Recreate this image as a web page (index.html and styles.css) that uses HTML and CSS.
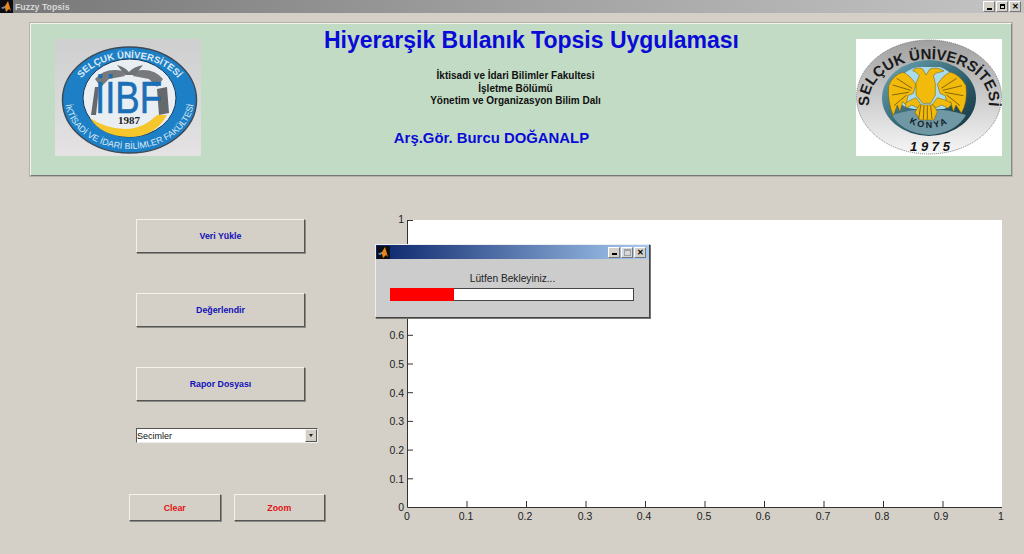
FILE: index.html
```html
<!DOCTYPE html>
<html>
<head>
	<meta charset="utf-8"/>
	<title>Fuzzy Topsis</title>
	<link rel="stylesheet" href="styles.css">
</head>
<body>
	<div id="window">
		<div id="titlebar">
			<svg class="appicon" viewBox="0 0 13 13"><rect width="13" height="13" fill="#0c0c14"/><path d="M1 8 L5 6 L8 1 L11 11 L9 9 L6 12 L5 8 Z" fill="#e8861c"/><path d="M1 8 L5 6 L5 8 L3 9 Z" fill="#5a8fc0"/></svg>
			<span class="apptitle">Fuzzy Topsis</span>
			<div class="winbtns">
				<span class="winbtn"><i class="glyph-min"></i></span>
				<span class="winbtn"><i class="glyph-restore"></i></span>
				<span class="winbtn glyph-close">✕</span>
			</div>
		</div>

		<div id="header">
			<svg class="logo" viewBox="0 0 146 117">
				<defs>
					<linearGradient id="greybg" x1="0" y1="0" x2="0" y2="1"><stop offset="0" stop-color="#cfcfcf"/><stop offset="1" stop-color="#e4e2e2"/></linearGradient>
					<path id="arcTop" d="M18.500 60 A56 41 0 0 1 130.500 60"/>
					<path id="arcBottom" d="M10 60 A64.500 50 0 0 0 139 60"/>
				</defs>
				<rect width="146" height="117" fill="url(#greybg)"/>
				<ellipse cx="74.500" cy="61" rx="67" ry="53" fill="#1d80c6" stroke="#3a4a58" stroke-width="1.500"/>
				<ellipse cx="74.500" cy="59" rx="46.500" ry="39" fill="#e9eef2" stroke="#17365a"/>
				<path d="M35 79 Q52 90 70 90 Q88 90 102 76 L112 76 Q100 98 74 98 Q46 97 35 79 Z" fill="#f5c72c"/>
				<path d="M40 40 Q50 28 68 32 L70 37 L54 40 L46 48 Z M108 40 Q98 28 80 32 L78 37 L94 40 L102 48 Z" fill="#77797c"/>
				<path d="M62 26 Q70 28 74 33 Q78 28 88 26 L80 36 L70 36 Z" fill="#6f7376"/>
				<path d="M40 48 L36 76 L41 76 L44 48 Z M102 50 L112 48 L114 74 L104 76 Z" fill="#66696c"/>
				<text class="iibf" x="40" y="74" textLength="67" lengthAdjust="spacingAndGlyphs">İİBF</text>
				<text class="year" x="74" y="85" text-anchor="middle">1987</text>
				<text class="ring"><textPath href="#arcTop" startOffset="50%" text-anchor="middle">SELÇUK ÜNİVERSİTESİ</textPath></text>
				<text class="ring ring-small"><textPath href="#arcBottom" startOffset="50%" text-anchor="middle">İKTİSADİ VE İDARİ BİLİMLER FAKÜLTESİ</textPath></text>
			</svg>

			<div class="heading">
				<h1>Hiyerarşik Bulanık Topsis Uygulaması</h1>
				<p class="faculty">İktisadi ve İdari Bilimler Fakultesi<br>İşletme Bölümü<br>Yönetim ve Organizasyon Bilim Dalı</p>
				<p class="author">Arş.Gör. Burcu DOĞANALP</p>
			</div>

			<svg class="logo" viewBox="0 0 146 117">
				<defs>
					<linearGradient id="rim" x1="0" y1="0" x2="0" y2="1"><stop offset="0" stop-color="#a0a0a0"/><stop offset="0.600" stop-color="#d4d4d4"/><stop offset="1" stop-color="#f6f6f6"/></linearGradient>
					<linearGradient id="core" x1="0" y1="0" x2="1" y2="1"><stop offset="0" stop-color="#6fa9b8"/><stop offset="0.600" stop-color="#2b5a68"/><stop offset="1" stop-color="#15323c"/></linearGradient>
					<path id="arcRight" d="M14 70 A60 42 0 1 1 132 70"/>
					<path id="arcKonya" d="M44 78 Q73 100 102 78"/>
				</defs>
				<rect width="146" height="117" fill="#fff"/>
				<ellipse cx="73" cy="58" rx="72.500" ry="57" fill="url(#rim)" stroke="#777" stroke-dasharray="1 1"/>
				<ellipse cx="73" cy="59" rx="47" ry="38" fill="url(#core)"/>
				<path d="M34 52 Q44 32 62 28 L84 28 Q100 34 106 52 Q100 66 88 70 L58 70 Q42 68 34 52 Z" fill="#a9dcea"/>
				<path d="M36 76 Q73 64 110 76 Q100 94 73 96 Q46 94 36 76 Z" fill="#6f98a4"/>
				<g class="eagle" transform="translate(24 16) scale(0.3333)">
					<path d="M108 88 Q85 55 68 52 Q40 60 26 92 Q22 140 40 182 L52 150 L60 170 L68 140 L78 150 L84 122 L100 115 Z"/>
					<path d="M172 88 Q195 55 212 52 Q240 60 258 92 Q264 140 244 175 L228 150 L220 170 L212 140 L202 150 L196 122 L180 115 Z"/>
					<path d="M98 46 Q112 34 128 42 L138 60 L150 42 Q170 34 192 48 L178 52 Q168 52 160 62 L166 85 L166 120 L152 145 L128 145 L108 120 L108 85 L118 62 Q110 52 98 46 Z"/>
					<path d="M75 145 Q90 135 108 128 L124 150 L112 158 L95 150 L80 160 Z"/>
					<path d="M215 145 Q200 135 172 128 L156 150 L168 158 L185 150 L205 160 Z"/>
					<path d="M118 150 L160 150 L172 170 L162 195 L120 195 L105 172 Z"/>
				</g>
				<path class="feathers" transform="translate(24 16) scale(0.3333)" d="M96 100 L50 70 M92 106 L38 90 M86 112 L36 120 M80 120 L42 152 M184 100 L230 70 M188 106 L246 92 M194 112 L250 122 M200 120 L240 152 M122 152 L116 192 M132 152 L130 194 M142 152 L142 194 M152 152 L156 192"/>
				<text class="seal"><textPath href="#arcRight" startOffset="50%" text-anchor="middle">SELÇUK ÜNİVERSİTESİ</textPath></text>
				<text class="konya"><textPath href="#arcKonya" startOffset="50%" text-anchor="middle">KONYA</textPath></text>
				<text class="founded" x="74" y="112" text-anchor="middle">1 9 7 5</text>
			</svg>
		</div>

		<div id="content">
			<div id="side">
				<div class="button wide blue">Veri Yükle</div>
				<div class="button wide blue">Değerlendir</div>
				<div class="button wide blue">Rapor Dosyası</div>
				<div id="choice">
					<span>Secimler</span>
					<span class="arrow"></span>
				</div>
				<div id="actions">
					<div class="button small red">Clear</div>
					<div class="button small red">Zoom</div>
				</div>
			</div>

			<svg id="plot" viewBox="0 -6 640 320">
				<rect x="27" y="4" width="595" height="287" fill="#fff"/>
				<g stroke="#333" fill="none">
					<path d="M27.500 4 V291.500 H622"/>
					<path d="M27 4.500 H33 M27 33.200 H33 M27 61.900 H33 M27 90.600 H33 M27 119.300 H33 M27 148 H33 M27 176.700 H33 M27 205.400 H33 M27 234.100 H33 M27 262.800 H33"/>
					<path d="M87 291 V285 M146.500 291 V285 M206 291 V285 M265.500 291 V285 M325 291 V285 M384.500 291 V285 M444 291 V285 M503.500 291 V285 M563 291 V285"/>
				</g>
				<g class="ticks ylabels">
					<text x="24" y="7">1</text>
					<text x="24" y="37">0.9</text>
					<text x="24" y="66">0.8</text>
					<text x="24" y="94">0.7</text>
					<text x="24" y="123">0.6</text>
					<text x="24" y="152">0.5</text>
					<text x="24" y="181">0.4</text>
					<text x="24" y="209">0.3</text>
					<text x="24" y="238">0.2</text>
					<text x="24" y="267">0.1</text>
					<text x="24" y="295">0</text>
				</g>
				<g class="ticks xlabels">
					<text x="27" y="304">0</text>
					<text x="86" y="304">0.1</text>
					<text x="145" y="304">0.2</text>
					<text x="205" y="304">0.3</text>
					<text x="264" y="304">0.4</text>
					<text x="324" y="304">0.5</text>
					<text x="383" y="304">0.6</text>
					<text x="443" y="304">0.7</text>
					<text x="502" y="304">0.8</text>
					<text x="561" y="304">0.9</text>
					<text x="621" y="304">1</text>
				</g>
			</svg>
		</div>

		<div id="waitbar">
			<div class="waitbar-title">
				<svg class="appicon" viewBox="0 0 13 13"><rect width="13" height="13" fill="#0c0c14"/><path d="M1 8 L5 6 L8 1 L11 11 L9 9 L6 12 L5 8 Z" fill="#e8861c"/><path d="M1 8 L5 6 L5 8 L3 9 Z" fill="#5a8fc0"/></svg>
				<div class="winbtns">
					<span class="winbtn"><i class="glyph-min"></i></span>
					<span class="winbtn off"><i class="glyph-max"></i></span>
					<span class="winbtn glyph-close">✕</span>
				</div>
			</div>
			<div class="waitbar-msg">Lütfen Bekleyiniz...</div>
			<div class="waitbar-track"><div class="waitbar-fill"></div></div>
		</div>
	</div>
</body>
</html>
```

FILE: styles.css
```css
html,body{
	margin:0;
	padding:0;
}
body{
	background:#d4d0c8;
	font-family:"Liberation Sans",Arial,sans-serif;
}
#window{
	position:relative;
	width:1024px;
	height:554px;
	overflow:hidden;
}
#titlebar{
	display:flex;
	align-items:center;
	height:13px;
	padding-right:3px;
	background:linear-gradient(to right,#777,#a0a0a0 50%,#c4c4c4);
}
.appicon{
	width:13px;
	height:13px;
	flex:none;
}
.apptitle{
	margin-left:2px;
	font-size:8.800px;
	font-weight:bold;
	color:#d8d8d8;
}
.winbtns{
	display:flex;
	gap:1px;
	margin-left:auto;
}
.winbtn{
	display:flex;
	align-items:center;
	justify-content:center;
	box-sizing:border-box;
	width:12px;
	height:11px;
	background:#d4d0c8;
	border:1px solid;
	border-color:#fff #777 #777 #fff;
	font-size:8px;
	font-weight:bold;
	color:#000;
}
.glyph-min{
	width:5px;
	height:2px;
	margin-top:4px;
	background:#000;
}
.glyph-restore{
	width:5px;
	height:5px;
	border:1px solid #000;
	border-top-width:2px;
	box-sizing:border-box;
}
.glyph-max{
	width:7px;
	height:7px;
	border:1px solid #a0a0a0;
	border-top-width:2px;
	box-sizing:border-box;
}
.winbtn.off{
	background:#d8d8d8;
}

#header{
	display:flex;
	justify-content:space-between;
	box-sizing:border-box;
	width:982px;
	height:153px;
	margin:10px 0 0 30px;
	padding:15px 9px 0 24px;
	background:#c1dbc4;
	border:1px solid;
	border-color:#f4f4f0 #888 #777 #f4f4f0;
	outline:1px solid #b5b2aa;
}
.logo{
	width:146px;
	height:117px;
	flex:none;
}
.iibf{
	font:44px "Liberation Sans",sans-serif;
	fill:#1b6fb6;
	stroke:#1b6fb6;
	stroke-width:0.600;
}
.year{
	font:bold 11px "Liberation Serif",serif;
	fill:#222;
}
.ring{
	font:bold 9.500px "Liberation Sans",sans-serif;
	fill:#dfeaf4;
}
.ring-small{
	font-size:8.800px;
	font-weight:normal;
}
.eagle{
	fill:#f2bb0c;
	stroke:#6e540a;
	stroke-width:1.500;
}
.feathers{
	fill:none;
	stroke:#6e540a;
	stroke-width:2.500;
}
.seal{
	font:bold 15px "Liberation Sans",sans-serif;
	fill:#1a1a1a;
}
.konya{
	font:bold 9px "Liberation Sans",sans-serif;
	fill:#16242a;
	letter-spacing:2px;
}
.founded{
	font:italic bold 13px "Liberation Sans",sans-serif;
	fill:#111;
}
.heading{
	flex:1;
	text-align:center;
	margin-top:-13px;
}
.heading h1{
	margin:0 0 0 6px;
	font-size:23px;
	line-height:28px;
	font-weight:bold;
	color:#0a0ad8;
}
.faculty{
	margin:16px 26px 0 0;
	font-size:10px;
	line-height:12.500px;
	font-weight:bold;
	color:#111;
}
.author{
	margin:20px 74px 0 0;
	font-size:14.900px;
	line-height:20px;
	font-weight:bold;
	color:#0a0ad8;
}

#content{
	display:flex;
	margin-top:42px;
}
#side{
	width:196px;
	margin:1px 0 0 129px;
	flex:none;
}
.button{
	display:flex;
	align-items:center;
	justify-content:center;
	box-sizing:border-box;
	background:#d4d0c8;
	border:1px solid;
	border-color:#f4f2ec #555 #555 #f4f2ec;
	box-shadow:1px 1px 0 #8c8a84;
	font-size:8.800px;
	font-weight:bold;
}
.wide{
	width:169px;
	height:34px;
	margin:0 0 40px 7px;
}
.small{
	width:92px;
	height:27px;
}
.blue{
	color:#1010b8;
}
.red{
	color:#e01414;
}
#choice{
	display:flex;
	align-items:center;
	justify-content:space-between;
	box-sizing:border-box;
	width:182px;
	height:15px;
	margin:-13px 0 0 7px;
	background:#fff;
	border:1px solid;
	border-color:#555 #eee #eee #555;
	font-size:9px;
	color:#111;
}
.arrow{
	position:relative;
	box-sizing:border-box;
	width:12px;
	height:13px;
	background:#d4d0c8;
	border:1px solid;
	border-color:#f4f2ec #555 #555 #f4f2ec;
}
.arrow::after{
	content:"";
	position:absolute;
	left:3px;
	top:4px;
	border:2px solid transparent;
	border-top:3px solid #222;
}
#actions{
	display:flex;
	gap:13px;
	margin-top:51px;
}
#plot{
	width:640px;
	height:320px;
	margin:-8px 0 0 55px;
	flex:none;
}
.ticks text{
	font:10.500px "Liberation Sans",sans-serif;
	fill:#222;
}
.ylabels text{
	text-anchor:end;
}
.xlabels text{
	text-anchor:middle;
}

#waitbar{
	position:absolute;
	left:375px;
	top:244px;
	box-sizing:border-box;
	width:275px;
	height:74px;
	background:#ccc;
	border:1px solid;
	border-color:#eee #444 #444 #eee;
	box-shadow:1px 1px 0 #77756f;
}
.waitbar-title{
	display:flex;
	align-items:center;
	height:14px;
	padding:0 3px 0 1px;
	background:linear-gradient(to right,#0a246a,#a6caf0);
}
.waitbar-msg{
	margin-top:13px;
	font-size:10.200px;
	line-height:14px;
	text-align:center;
	color:#222;
}
.waitbar-track{
	box-sizing:border-box;
	width:244px;
	height:13px;
	margin:2px 0 0 14px;
	background:#fff;
	border:1px solid #444;
}
.waitbar-fill{
	width:64px;
	height:13px;
	margin:-1px 0 0 -1px;
	background:#f00;
}
```
